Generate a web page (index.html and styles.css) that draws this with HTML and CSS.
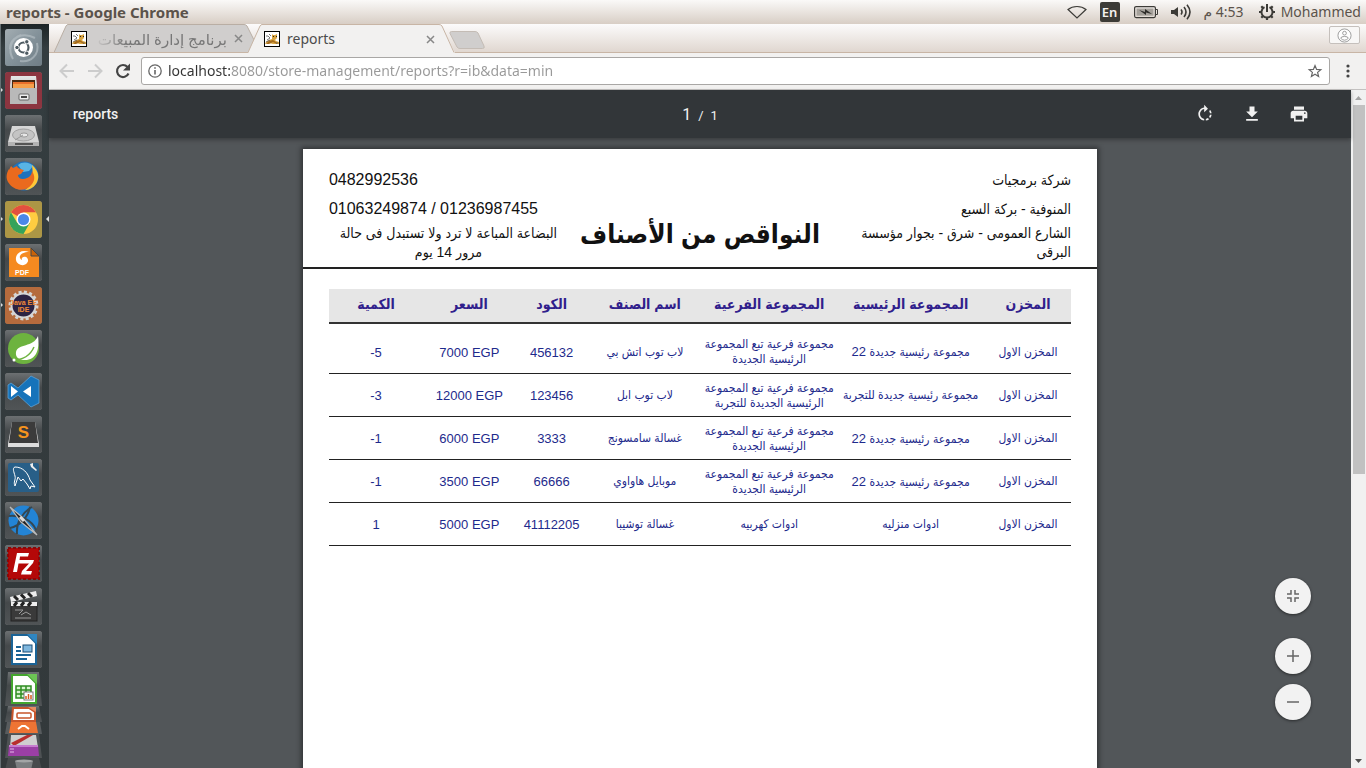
FILE: index.html
```html
<!DOCTYPE html>
<html lang="en">
<head>
<meta charset="utf-8">
<title>reports</title>
<link rel="stylesheet" href="styles.css">
</head>
<body>
<svg class="defs" aria-hidden="true">
  <defs>
    <linearGradient id="tile" x1="0" y1="0" x2="0" y2="1"><stop offset="0" stop-color="#6c7072"/><stop offset=".4" stop-color="#45494b"/><stop offset="1" stop-color="#505456"/></linearGradient>
    <linearGradient id="metal" x1="0" y1="0" x2="0" y2="1"><stop offset="0" stop-color="#e6e6e6"/><stop offset="1" stop-color="#a9a9a9"/></linearGradient>
    <linearGradient id="dash" x1="0" y1="0" x2="1" y2="1"><stop offset="0" stop-color="#a3adb2"/><stop offset=".5" stop-color="#84929a"/><stop offset="1" stop-color="#6f7d85"/></linearGradient>
    <symbol id="cat" viewBox="0 0 16 16">
      <rect width="16" height="16" fill="#000"/><rect x="1" y="1" width="14" height="14" fill="#fff"/>
      <path d="M8 3l1 1h2l2-1v4l-2 2 1 1 3 1v2H9l-4-1-4 1 1-2 3-2 3-1z" fill="#d9a441"/>
      <path d="M9 9l-4 1-3 3h3l4-2 4 2v-1z" fill="#a66b1c"/>
      <path d="M2 5h2l2 2-3 2M5 3l2 2M2 11l4-2M12 12h2" stroke="#555" stroke-width=".8" fill="none"/>
      <path d="M9 5h1v1H9zM12 5h1v1h-1z" fill="#222"/>
    </symbol>
  </defs>
</svg>

<header class="menubar">
  <h1 class="menubar-title">reports - Google Chrome</h1>
  <div class="indicators">
    <svg class="ind" width="20" height="14" viewBox="0 0 20 14"><path d="M1 4.500C6 .5 14 .5 19 4.500L10 13z" fill="none" stroke="#3c3b37" stroke-width="1.200"/></svg>
    <span class="lang">En</span>
    <svg class="ind" width="24" height="14" viewBox="0 0 24 14"><rect x=".6" y="1.600" width="20.800" height="11" rx="1.500" fill="none" stroke="#3c3b37" stroke-width="1.200"/><rect x="2.500" y="3.500" width="17" height="7.200" fill="#a5a19b"/><path d="M22 4.500h1.500v5H22" fill="none" stroke="#3c3b37"/><path d="M5 5l6 2V4l7 5-6-1.500v2.500z" fill="#2e2d2a"/></svg>
    <svg class="ind" width="20" height="16" viewBox="0 0 20 16"><path d="M0 6h3l4-3v10l-4-3H0z" fill="#3c3b37"/><path d="M10 5.500q2 2.500 0 5M13 3q4 5 0 10M16 .7q6 7.300 0 14.600" fill="none" stroke="#3c3b37" stroke-width="1.600"/></svg>
    <span class="clock" dir="rtl">4:53 م</span>
    <svg class="ind" width="16" height="16" viewBox="0 0 16 16"><path d="M5.500 3.200A5.500 5.500 0 1 0 10.500 3.200" fill="none" stroke="#3c3b37" stroke-width="2"/><path d="M8 0v8" stroke="#3c3b37" stroke-width="2"/><path d="M0 8h2.500M13.500 8H16M8 13.500V16M2.300 2.300l1.900 1.900M13.700 2.300l-1.900 1.900M2.300 13.700l1.900-1.900M13.700 13.700l-1.900-1.900" stroke="#3c3b37" stroke-width="2.200"/></svg>
    <span class="user">Mohammed</span>
  </div>
</header>

<div class="desktop">
  <nav class="launcher" aria-label="Launcher">
    <button class="app" aria-label="Dash"><svg viewBox="0 0 37 37"><rect width="37" height="37" rx="3" fill="url(#dash)"/><path d="M5 20C5 8 18 3 30 9M32 14c3 12-7 20-17 18M8 30C3 22 5 10 16 6" stroke="#b9c3c8" stroke-width="2" fill="none" opacity=".6"/><circle cx="18.500" cy="18.500" r="9.500" fill="#fff"/><circle cx="18.500" cy="18.500" r="5" fill="none" stroke="#4d5a61" stroke-width="2.200"/><g fill="#4d5a61" stroke="#fff" stroke-width="1"><circle cx="12" cy="18.500" r="2.200"/><circle cx="21.800" cy="12.800" r="2.200"/><circle cx="21.800" cy="24.200" r="2.200"/></g></svg></button>
    <button class="app running" aria-label="Files"><svg viewBox="0 0 37 37"><rect width="37" height="37" rx="3" fill="#8c3540"/><path d="M6 4h25l1 9v19H5V13z" fill="url(#metal)"/><rect x="7" y="8" width="23" height="8" fill="#4a2a12"/><rect x="8" y="10" width="21" height="2" fill="#e9702c"/><rect x="8" y="12" width="21" height="4" fill="#f5a04b"/><path d="M5 16h27v16H5z" fill="#b9b9b9"/><rect x="14" y="22" width="10" height="6" rx="1" fill="#eee" stroke="#666"/><rect x="16" y="24" width="6" height="2" fill="#444"/></svg></button>
    <button class="app" aria-label="Disk"><svg viewBox="0 0 37 37"><rect width="37" height="37" rx="3" fill="url(#tile)"/><path d="M7 11h23l4 16H3z" fill="#d6d6d6"/><path d="M3 27h31v4H3z" fill="#b3b3b3"/><path d="M10 28h18v2H10z" fill="#555"/><ellipse cx="18.500" cy="20" rx="11" ry="6" fill="#c4c4c4" stroke="#a0a0a0"/><ellipse cx="19" cy="20" rx="4" ry="2" fill="#e8e8e8" stroke="#999"/><path d="M10 25l8-5" stroke="#999"/></svg></button>
    <button class="app" aria-label="Firefox"><svg viewBox="0 0 37 37"><rect width="37" height="37" rx="3" fill="url(#tile)"/><circle cx="19" cy="18" r="14.500" fill="#1d72bd"/><path d="M13 7c4-4 12-3 15 1l-4 5-6 1z" fill="#58b4e5"/><path d="M27 7c7 6 8 13 4 19-3 4-7 6-11 6 6-4 9-11 7-25z" fill="#ffc737"/><path d="M4 12l2-4 2 2 4-2c1 3 4 3 7 4l-3 4-3 1c0 4 5 5 9 3 3-1 5-4 5-7 3 5 3 9 0 13-5 8-18 8-24-2-2-4-2-8 1-13z" fill="#ea6a1e"/></svg></button>
    <button class="app running focused" aria-label="Chrome"><svg viewBox="0 0 37 37"><rect width="37" height="37" rx="3" fill="#ac9645"/><circle cx="18.500" cy="18.500" r="14.500" fill="#ffcd41"/><path d="M18.500 18.500L5.900 11.300A14.500 14.500 0 0 1 31 11.300H18.500z" fill="#e2503f"/><path d="M5.900 11.300A14.500 14.500 0 0 0 18.500 33l6.300-11-12.500 0z" fill="#36a35b"/><circle cx="18.500" cy="18.500" r="7" fill="#fff"/><circle cx="18.500" cy="18.500" r="5.600" fill="#4a88e8"/></svg></button>
    <button class="app" aria-label="Foxit PDF"><svg viewBox="0 0 37 37"><rect width="37" height="37" rx="3" fill="url(#tile)"/><path d="M4 4h22l8 8v21H4z" fill="#f58a20"/><path d="M26 4v8h8z" fill="#c86208" stroke="#444"/><path d="M24 8c-8-3-14 2-13 8 1 5 8 7 11 3 2-2 1-5-1-6-3-1-5 1-4 3-5-3-1-8 7-8z" fill="#fff"/><text x="17" y="31" class="t-pdf">PDF</text></svg></button>
    <button class="app running" aria-label="Java EE IDE"><svg viewBox="0 0 37 37"><rect width="37" height="37" rx="3" fill="#b56b3d"/><circle cx="18.500" cy="18.500" r="13.500" fill="none" stroke="#d5d5d5" stroke-width="3" stroke-dasharray="3 2.300"/><circle cx="18.500" cy="18.500" r="12" fill="#2c2343" stroke="#d5d5d5" stroke-width="2"/><text x="18.500" y="18" class="t-java">Java EE</text><text x="18.500" y="25" class="t-java">IDE</text></svg></button>
    <button class="app" aria-label="Spring"><svg viewBox="0 0 37 37"><rect width="37" height="37" rx="3" fill="url(#tile)"/><circle cx="18.500" cy="18.500" r="15.500" fill="#6db33f"/><path d="M33 6c2 14-2 24-13 24-5 0-10-2-9-8 2-9 17-4 22-16z" fill="#fff"/><path d="M8 30c9 0 17-4 21-13" fill="none" stroke="#6db33f" stroke-width="1.500"/><circle cx="9" cy="30" r="1.500" fill="#fff"/></svg></button>
    <button class="app" aria-label="Visual Studio Code"><svg viewBox="0 0 37 37"><rect width="37" height="37" rx="3" fill="url(#tile)"/><path d="M26 3l8 4v23l-8 4-13-12-7 5-3-2V12l3-2 7 5z" fill="#1673ba" stroke="#64a9dc" stroke-width=".7"/><path d="M6 13v11l7-5.500zM26 13v11l-8-5.500z" fill="#fff"/></svg></button>
    <button class="app" aria-label="Sublime Text"><svg viewBox="0 0 37 37"><rect width="37" height="37" rx="3" fill="url(#tile)"/><path d="M7 6h23l4 22v3H3v-3z" fill="#ddd"/><path d="M7 6h23l3 21H4z" fill="#3b3b3b"/><text x="18.500" y="22" class="t-sub">S</text></svg></button>
    <button class="app" aria-label="MySQL Workbench"><svg viewBox="0 0 37 37"><rect width="37" height="37" rx="3" fill="url(#tile)"/><rect x="3" y="4" width="31" height="29" rx="2" fill="#285f88"/><path d="M10 27c-2-4 1-6 0-10-1-4-3-8 0-9 8 0 13 6 15 13l5 7-4-1-1 3-3-5-4-5-2 2-3-4z" fill="none" stroke="#fff" stroke-width="1"/><path d="M25 5l1 3 5 4 1-1-4-4V4z" fill="#eee"/></svg></button>
    <button class="app" aria-label="Editor"><svg viewBox="0 0 37 37"><rect width="37" height="37" rx="3" fill="url(#tile)"/><circle cx="18.500" cy="18.500" r="15" fill="#2384d5"/><path d="M4 14c12-1 23 4 27 14M12 32c-1-12 6-22 15-27M5 26c10-2 18-11 20-21" stroke="#344752" stroke-width="2" fill="none"/><path d="M5 5l12 10 15 18-16-13z" fill="#222" stroke="#bbb" stroke-width="1.200"/><path d="M15 15l4 4" stroke="#ddd" stroke-width="3"/></svg></button>
    <button class="app" aria-label="FileZilla"><svg viewBox="0 0 37 37"><rect width="37" height="37" rx="3" fill="url(#tile)"/><rect x="3" y="3" width="31" height="31" fill="#b40808" stroke="#8a0808" stroke-width="2" stroke-dasharray="3 2"/><path d="M8 27l4-19h12l-1 3.500h-8L14.500 15h6l-1 3.500h-6L12 27zM19 15h10l-1 3-7 8h6l-1 3.500H16l1-3.500 7-7.500h-6z" fill="#fff"/></svg></button>
    <button class="app" aria-label="Video editor"><svg viewBox="0 0 37 37"><rect width="37" height="37" rx="3" fill="url(#tile)"/><rect x="6" y="16" width="26" height="17" fill="#3a3a3a" stroke="#222"/><path d="M5 9l26-6 1 5-26 6z" fill="#eee"/><path d="M9 8l4 4M16 6.500l4 4M23 5l4 4" stroke="#222" stroke-width="3"/><path d="M6 14h26v4H6z" fill="#eee"/><path d="M9 18l3-4M16 18l3-4M23 18l3-4" stroke="#222" stroke-width="3"/><path d="M10 22h8l-4 4M16 27l5-3 5 3M10 30h16" stroke="#999" fill="none"/></svg></button>
    <button class="app" aria-label="Writer"><svg viewBox="0 0 37 37"><rect width="37" height="37" rx="3" fill="url(#tile)"/><path d="M7 4h16l8 8v21H7z" fill="#fff" stroke="#1a6396" stroke-width="2"/><path d="M22 3h10v10z" fill="#2f86c1"/><path d="M11 16h5M11 20h5M11 24h15M11 28h11" stroke="#1a6396" stroke-width="2"/><rect x="18" y="14" width="9" height="7" fill="#7fb7de" stroke="#1a4d75"/></svg></button>
    <button class="app fold-a" aria-label="Calc"><svg viewBox="0 0 37 34" preserveAspectRatio="none"><path d="M3 0h31l3 34H0z" fill="url(#tile)"/><path d="M7 3h16l8 8v20H7z" fill="#fff" stroke="#43a52f" stroke-width="2"/><path d="M22 2h10v10z" fill="#6cc455"/><path d="M11 14h15v12H11zM11 18h15M11 22h15M16 14v12M21 14v12" fill="#d8f3d0" stroke="#2f8d22" stroke-width="1.500"/><rect x="19" y="20" width="9" height="8" fill="#fff" stroke="#777"/><path d="M21 27v-3M23.500 27v-5M26 27v-4" stroke="#d55b21" stroke-width="1.500"/></svg></button>
    <button class="app fold-b" aria-label="Impress"><svg viewBox="0 0 37 16"><path d="M3 0h31l3 16H0z" fill="url(#tile)"/><path d="M8 2h16l6 4v9H7z" fill="#fff" stroke="#c8552b" stroke-width="2"/><path d="M23 1h8v5z" fill="#e88b62"/><rect x="12" y="7" width="14" height="5" rx="1" fill="#fff" stroke="#c8552b" stroke-width="1.500"/></svg></button>
    <button class="app fold-c" aria-label="Software"><svg viewBox="0 0 37 12"><path d="M2 0h33l2 12H0z" fill="#585c5e"/><path d="M6 0h25l2 11H4z" fill="#ee7434"/><path d="M13 7l4-3h3l4 3" stroke="#fff" stroke-width="2" fill="none"/></svg></button>
    <button class="app fold-d" aria-label="Archive"><svg viewBox="0 0 37 24"><path d="M3 0h31l3 24H0z" fill="#4e5254"/><path d="M6 1h25l2 13H5z" fill="#cfcfcf"/><path d="M6 9l16-8h6L9 12z" fill="#b82f2f"/><path d="M4 11h29l1 11H3z" fill="#9b3fa5"/><path d="M4 11h29v2H4z" fill="#c77ccf"/><path d="M5 15h4M5 18h4" stroke="#e3b9e8"/></svg></button>
    <button class="app fold-e" aria-label="Trash"><svg viewBox="0 0 37 12"><path d="M3 0h31l3 12H0z" fill="#474b4d"/><path d="M10 3h18l-2 9H12z" fill="#7a7e80"/><ellipse cx="19" cy="3" rx="9" ry="1.500" fill="#a2a5a6"/></svg></button>
  </nav>

  <main class="browser">
    <div class="tabstrip">
      <div class="tab back">
        <svg class="tab-shape" viewBox="0 0 202 28" preserveAspectRatio="none"><path d="M0 28.500L12 2q1-1.500 2-1.500H190q2 0 3 1.500L202 20l-5 8.500z" fill="#d0cecd" stroke="#b9aea4"/></svg>
        <svg class="favicon"><use href="#cat"/></svg>
        <span class="tab-title rtl" lang="ar">برنامج إدارة المبيعات</span>
        <button class="close" aria-label="Close tab"><svg viewBox="0 0 9 9"><path d="M1 1l7 7M8 1L1 8"/></svg></button>
      </div>
      <div class="tab front">
        <svg class="tab-shape" viewBox="0 0 207 29" preserveAspectRatio="none"><path d="M0 29L12 2q1-1.500 2-1.500H191q2 0 3 1.500L207 29z" fill="#f2f1f0"/><path d="M0 28.500L12 2q1-1.500 2-1.500H191q2 0 3 1.500L206 28.500" fill="none" stroke="#c8b5a5"/></svg>
        <svg class="favicon"><use href="#cat"/></svg>
        <span class="tab-title">reports</span>
        <button class="close" aria-label="Close tab"><svg viewBox="0 0 9 9"><path d="M1 1l7 7M8 1L1 8"/></svg></button>
      </div>
      <button class="newtab" aria-label="New tab"><svg viewBox="0 0 36 18"><path d="M2.500.5H26q2 0 3 1.500l6 13q1 2.500-1.500 2.500H11q-2 0-3-1.500L1 2.500Q.5.500 2.500.5z" fill="#d0cecd" stroke="#c4bcb5"/></svg></button>
      <button class="profile" aria-label="Profile"><svg viewBox="0 0 16 16"><circle cx="8" cy="8" r="7" fill="#fff" stroke="#999"/><circle cx="8" cy="5.500" r="2" fill="none" stroke="#999"/><path d="M4 11q0-2 4-2t4 2q-2 2-4 2t-4-2z" fill="none" stroke="#999"/></svg></button>
    </div>

    <div class="toolbar">
      <button class="nav" aria-label="Back"><svg viewBox="0 0 16 16"><path d="M15 8H2M8 1.500L1.500 8 8 14.500" stroke="#ccc" stroke-width="2" fill="none"/></svg></button>
      <button class="nav" aria-label="Forward"><svg viewBox="0 0 16 16"><path d="M1 8h13M8 1.500L14.500 8 8 14.500" stroke="#ccc" stroke-width="2" fill="none"/></svg></button>
      <button class="nav" aria-label="Reload"><svg viewBox="0 0 16 16"><path d="M13.500 10.500A6 6 0 1 1 12.500 4" stroke="#444" stroke-width="2.200" fill="none"/><path d="M15 .5v7H8z" fill="#444"/></svg></button>
      <div class="omnibox">
        <svg class="info" viewBox="0 0 14 14"><circle cx="7" cy="7" r="6.200" fill="none" stroke="#666" stroke-width="1.300"/><path d="M7 6v4.500M7 3.200v1.600" stroke="#666" stroke-width="1.600"/></svg>
        <input class="url" type="text" aria-label="Address" value="localhost:8080/store-management/reports?r=ib&amp;data=min">
        <button class="star" aria-label="Bookmark"><svg viewBox="0 0 16 16"><path d="M8 2.500l1.600 3.900 4.200.3-3.200 2.700 1 4.100L8 11.300l-3.600 2.200 1-4.100L2.200 6.700l4.200-.3z" fill="none" stroke="#666" stroke-width="1.200"/></svg></button>
      </div>
      <button class="menu" aria-label="Menu"><svg viewBox="0 0 4 14"><circle cx="2" cy="2" r="1.600"/><circle cx="2" cy="7" r="1.600"/><circle cx="2" cy="12" r="1.600"/></svg></button>
    </div>

    <div class="viewer">
      <div class="pdf">
        <div class="pdfbar">
          <span class="pdf-name">reports</span>
          <div class="pager"><span class="current">1</span><span>/</span><span>1</span></div>
          <div class="actions">
            <button aria-label="Rotate"><svg viewBox="0 0 24 24"><path d="M15.550 5.550L11 1v3.070C7.060 4.560 4 7.920 4 12s3.050 7.440 7 7.930v-2.020c-2.840-.48-5-2.940-5-5.910s2.160-5.430 5-5.910V10l4.550-4.450zM19.930 11c-.17-1.390-.72-2.730-1.620-3.890l-1.420 1.420c.54.750.88 1.600 1.020 2.470h2.020zM13 17.900v2.020c1.390-.17 2.740-.71 3.900-1.610l-1.440-1.440c-.75.540-1.590.890-2.460 1.030zm3.890-2.420l1.420 1.410c.9-1.160 1.450-2.500 1.620-3.890h-2.020c-.14.870-.48 1.720-1.020 2.480z"/></svg></button>
            <button aria-label="Download"><svg viewBox="0 0 24 24"><path d="M19 9h-4V3H9v6H5l7 7 7-7zM5 18v2h14v-2H5z"/></svg></button>
            <button aria-label="Print"><svg viewBox="0 0 24 24"><path d="M19 8H5c-1.660 0-3 1.340-3 3v6h4v4h12v-4h4v-6c0-1.660-1.340-3-3-3zm-3 11H8v-5h8v5zm3-7c-.55 0-1-.45-1-1s.45-1 1-1 1 .45 1 1-.45 1-1 1zm-1-9H6v4h12V3z"/></svg></button>
          </div>
        </div>

        <div class="canvas">
          <article class="sheet" lang="ar">
            <header class="letterhead">
              <div class="contact">
                <p class="phone">0482992536</p>
                <p class="phone">01063249874 / 01236987455</p>
                <p class="note">البضاعة المباعة لا ترد ولا تستبدل فى حالة<br>مرور 14 يوم</p>
              </div>
              <h2 class="report-title">النواقص من الأصناف</h2>
              <div class="company">
                <p>شركة برمجيات</p>
                <p>المنوفية - بركة السبع</p>
                <p class="street">الشارع العمومى - شرق - بجوار مؤسسة<br>البرقى</p>
              </div>
            </header>
            <div class="table-wrap">
              <table class="stock" dir="rtl">
                <colgroup><col class="c-store"><col class="c-main"><col class="c-sub"><col class="c-name"><col class="c-code"><col class="c-price"><col class="c-qty"></colgroup>
                <thead><tr><th>المخزن</th><th>المجموعة الرئيسية</th><th>المجموعة الفرعية</th><th>اسم الصنف</th><th>الكود</th><th>السعر</th><th>الكمية</th></tr></thead>
                <tbody>
                  <tr class="spacer" aria-hidden="true"><td colspan="7"></td></tr>
                  <tr><td>المخزن الاول</td><td>مجموعة رئيسية جديدة <span class="n">22</span></td><td>مجموعة فرعية تبع المجموعة<br>الرئيسية الجديدة</td><td>لاب توب اتش بي</td><td class="n" dir="ltr">456132</td><td class="n" dir="ltr">7000 EGP</td><td class="n" dir="ltr">-5</td></tr>
                  <tr><td>المخزن الاول</td><td>مجموعة رئيسية جديدة للتجربة</td><td>مجموعة فرعية تبع المجموعة<br>الرئيسية الجديدة للتجربة</td><td>لاب توب ابل</td><td class="n" dir="ltr">123456</td><td class="n" dir="ltr">12000 EGP</td><td class="n" dir="ltr">-3</td></tr>
                  <tr><td>المخزن الاول</td><td>مجموعة رئيسية جديدة <span class="n">22</span></td><td>مجموعة فرعية تبع المجموعة<br>الرئيسية الجديدة</td><td>غسالة سامسونج</td><td class="n" dir="ltr">3333</td><td class="n" dir="ltr">6000 EGP</td><td class="n" dir="ltr">-1</td></tr>
                  <tr><td>المخزن الاول</td><td>مجموعة رئيسية جديدة <span class="n">22</span></td><td>مجموعة فرعية تبع المجموعة<br>الرئيسية الجديدة</td><td>موبايل هاواوي</td><td class="n" dir="ltr">66666</td><td class="n" dir="ltr">3500 EGP</td><td class="n" dir="ltr">-1</td></tr>
                  <tr><td>المخزن الاول</td><td>ادوات منزليه</td><td>ادوات كهربيه</td><td>غسالة توشيبا</td><td class="n" dir="ltr">41112205</td><td class="n" dir="ltr">5000 EGP</td><td class="n" dir="ltr">1</td></tr>
                </tbody>
              </table>
            </div>
          </article>
        </div>

        <div class="zoom">
          <button class="fit" aria-label="Fit to page"><svg viewBox="0 0 12 12"><path d="M0 4h4V0M8 0v4h4M0 8h4v4M8 12V8h4"/></svg></button>
          <button aria-label="Zoom in"><svg viewBox="0 0 12 12"><path d="M6 0v12M0 6h12"/></svg></button>
          <button aria-label="Zoom out"><svg viewBox="0 0 12 12"><path d="M0 6h12"/></svg></button>
        </div>
      </div>
      <div class="scrollbar" aria-hidden="true">
        <svg viewBox="0 0 15 15"><path d="M4 10h7L7.500 6z" fill="#a3a3a3"/></svg>
        <div class="track"><div class="thumb"></div></div>
        <svg viewBox="0 0 15 15"><path d="M4 6h7l-3.500 4z" fill="#505050"/></svg>
      </div>
    </div>
  </main>
</div>
</body>
</html>
```
FILE: styles.css
```css
* { box-sizing: border-box; }
html, body { height: 100%; margin: 0; }
body {
  display: flex;
  flex-direction: column;
  overflow: hidden;
  font-family: "Noto Sans", "DejaVu Sans", sans-serif;
  font-size: 14px;
  color: #4c4c4c;
}
button { display: flex; align-items: center; justify-content: center; padding: 0; border: 0; background: none; }
svg { display: block; flex: none; }
p, h1, h2 { margin: 0; }
.defs { position: absolute; width: 0; height: 0; }

/* System menu bar */
.menubar {
  display: flex;
  align-items: center;
  justify-content: space-between;
  flex: none;
  height: 24px;
  padding: 0 5px 0 6px;
  background: linear-gradient(#faf9f8, #d8cec5);
  color: #5b534b;
}
.menubar-title { font-size: 15px; line-height: 24px; }
.indicators { display: flex; align-items: center; line-height: 24px; }
.ind { margin-right: 13px; }
.lang { width: 20px; margin-right: 14px; border-radius: 2px; background: #3c3b37; color: #f4f1ee; font-size: 13px; font-weight: 600; line-height: 20px; text-align: center; }
.clock { margin-right: 15px; }
.indicators .ind:nth-last-child(2) { margin-right: 6px; }

.desktop { display: flex; flex: 1; min-height: 0; }

/* Launcher */
.launcher {
  display: flex;
  flex: none;
  flex-direction: column;
  gap: 6px;
  width: 49px;
  padding: 5px 0 0 4px;
  border-left: 1px solid #667074;
  background: linear-gradient(#1d2426, #343d40 24px, #33393b);
  overflow: hidden;
}
.app { position: relative; flex: none; width: 37px; height: 37px; border-radius: 3px; box-shadow: inset 0 0 0 1px #777; }
.app svg { width: 100%; height: 100%; }
.running::before, .focused::after { content: ""; position: absolute; top: 15px; border: 3px solid transparent; }
.running::before { left: -5px; border-left-color: #ddd; border-right-width: 0; }
.focused::after { right: -7px; border-right-color: #ddd; border-left-width: 0; }
.fold-a, .fold-b, .fold-c, .fold-d, .fold-e { box-shadow: none; }
.fold-a { height: 34px; margin-top: -2px; }
.fold-b { height: 16px; margin-top: -6px; }
.fold-c { height: 12px; margin-top: -6px; }
.fold-d { height: 24px; margin-top: -6px; }
.fold-e { height: 12px; margin-top: -6px; }
.t-pdf, .t-java, .t-sub { font-family: "Liberation Sans", sans-serif; font-weight: bold; text-anchor: middle; }
.t-pdf { font-size: 7px; fill: #fff; }
.t-java { font-size: 7px; fill: #f08a3a; }
.t-sub { font-size: 17px; fill: #f7941e; }

/* Browser chrome */
.browser { display: flex; flex: 1; flex-direction: column; min-width: 0; }
.tabstrip {
  display: flex;
  flex: none;
  height: 29px;
  padding: 0 6px 0 5px;
  background: linear-gradient(#fcfbfb, #e0d7d0);
  border-bottom: 1px solid #c8b5a5;
}
.tab { position: relative; display: flex; align-items: center; gap: 7px; height: 29px; padding-top: 1px; }
.tab > * { position: relative; }
.tab .tab-shape { position: absolute; top: 0; left: 0; width: 100%; height: 100%; }
.back { width: 202px; padding-left: 17px; padding-right: 13px; height: 28px; }
.front { width: 207px; margin-left: -8px; padding-left: 16px; padding-right: 20px; }
.favicon { width: 16px; height: 16px; }
.tab-title { flex: 1; overflow: hidden; line-height: 22px; white-space: nowrap; }
.rtl { direction: rtl; color: #777; font-size: 15px; -webkit-mask-image: linear-gradient(90deg, transparent, #000 32px); mask-image: linear-gradient(90deg, transparent, #000 32px); }
.close { width: 9px; height: 9px; }
.close svg { width: 9px; height: 9px; stroke: #888; stroke-width: 1.500; }
.newtab { align-self: flex-start; margin: 7px 0 0 -6px; }
.newtab svg { width: 36px; height: 18px; }
.profile { width: 31px; height: 18px; margin: 2px 0 0 auto; border: 1px solid #c5c0bc; border-radius: 2px; background: #f8f7f6; }
.profile svg { width: 15px; height: 15px; }

.toolbar {
  display: flex;
  align-items: center;
  flex: none;
  gap: 12px;
  height: 37px;
  padding: 0 16px 0 10px;
  background: #f2f1f0;
  border-bottom: 1px solid #c3c1c0;
}
.nav svg { width: 16px; height: 16px; }
.omnibox {
  display: flex;
  align-items: center;
  flex: 1;
  gap: 6px;
  height: 28px;
  margin-right: 4px;
  margin-left: -2px;
  padding: 0 6px;
  border: 1px solid #a9a7a5;
  border-radius: 3px;
  background: #fff;
}
.info { width: 14px; height: 14px; }
.url {
  flex: 1;
  min-width: 0;
  padding: 0;
  border: 0;
  outline: 0;
  background: linear-gradient(90deg, #333 62px, #999 62px);
  -webkit-background-clip: text;
  background-clip: text;
  color: transparent;
  font: inherit;
  line-height: 24px;
}
.star svg { width: 16px; height: 16px; }
.menu svg { width: 4px; height: 14px; fill: #444; }

/* PDF viewer */
.viewer { display: flex; flex: 1; min-height: 0; }
.pdf { position: relative; display: flex; flex: 1; flex-direction: column; min-width: 0; background: #525659; }
.pdfbar {
  position: relative;
  z-index: 1;
  display: grid;
  grid-template-columns: 1fr auto 1fr;
  align-items: center;
  flex: none;
  height: 48px;
  padding: 0 24px;
  background: #323639;
  box-shadow: 0 2px 4px rgba(0, 0, 0, .3);
  color: #f1f1f1;
  font-family: Roboto, sans-serif;
}
.pdf-name { font-weight: 500; }
.pager { display: flex; align-items: baseline; gap: 7px; font-size: 13px; }
.current { font-size: 16px; }
.actions { display: flex; justify-content: flex-end; gap: 23px; padding-right: 16px; }
.actions svg { width: 20px; height: 20px; margin: 0 2px; fill: #f1f1f1; }
.canvas { display: flex; flex: 1; justify-content: center; min-height: 0; padding-top: 11px; overflow: hidden; }
.sheet {
  width: 61%;
  min-height: 1122px;
  background: #fff;
  box-shadow: 0 0 5px 2px rgba(0, 0, 0, .4);
  color: #111;
  font-family: "Liberation Sans", "DejaVu Sans Condensed", "DejaVu Sans", sans-serif;
}

.letterhead {
  display: grid;
  grid-template-columns: 239px 1fr 239px;
  height: 120px;
  padding: 21px 26px 0;
  border-bottom: 2px solid #222;
  white-space: nowrap;
}
.phone { margin-bottom: 9px; font-size: 16px; line-height: 20px; }
.note { direction: rtl; font-size: 14px; line-height: 19px; text-align: center; margin-top: -4px; }
.report-title { direction: rtl; padding-top: 42px; font-size: 26px; line-height: 44px; text-align: center; }
.company { direction: rtl; font-size: 14px; line-height: 20px; }
.company p { margin-bottom: 9px; }
.company .street { margin-top: -4px; line-height: 19px; }

.table-wrap { padding: 20px 26px; }
.stock { width: 100%; table-layout: fixed; border-collapse: collapse; color: #1e2a8c; font-size: 12px; line-height: 15px; white-space: nowrap; text-align: center; }
.stock th { height: 34px; padding: 0 0 2px; background: #e6e6e6; border-bottom: 2px solid #333; color: #30208c; font-size: 14px; }
.stock td { height: 43px; padding: 2px 0 0; border-bottom: 1px solid #222; }
.stock .spacer td { height: 7px; padding: 0; border: 0; }
.stock .n { font-size: 13px; }
.c-store { width: 86px; }
.c-main { width: 148px; }
.c-sub { width: 134px; }
.c-name { width: 114px; }
.c-code { width: 72px; }
.c-price { width: 92px; }
.c-qty { width: 94px; }

.zoom { position: absolute; right: 40px; bottom: 48px; display: flex; flex-direction: column; gap: 10px; }
.zoom button { width: 36px; height: 36px; border-radius: 50%; background: #f2f2f2; box-shadow: 0 1px 3px rgba(0, 0, 0, .5); }
.zoom .fit { margin-bottom: 14px; }
.zoom svg { width: 12px; height: 12px; fill: none; stroke: #666; stroke-width: 1.500; }

.scrollbar { display: flex; flex: none; flex-direction: column; width: 15px; background: #f1f1f1; }
.scrollbar svg { width: 15px; height: 15px; }
.track { flex: 1; padding: 0 1px 0 2px; }
.thumb { height: 57%; background: #c1c1c1; }
```
